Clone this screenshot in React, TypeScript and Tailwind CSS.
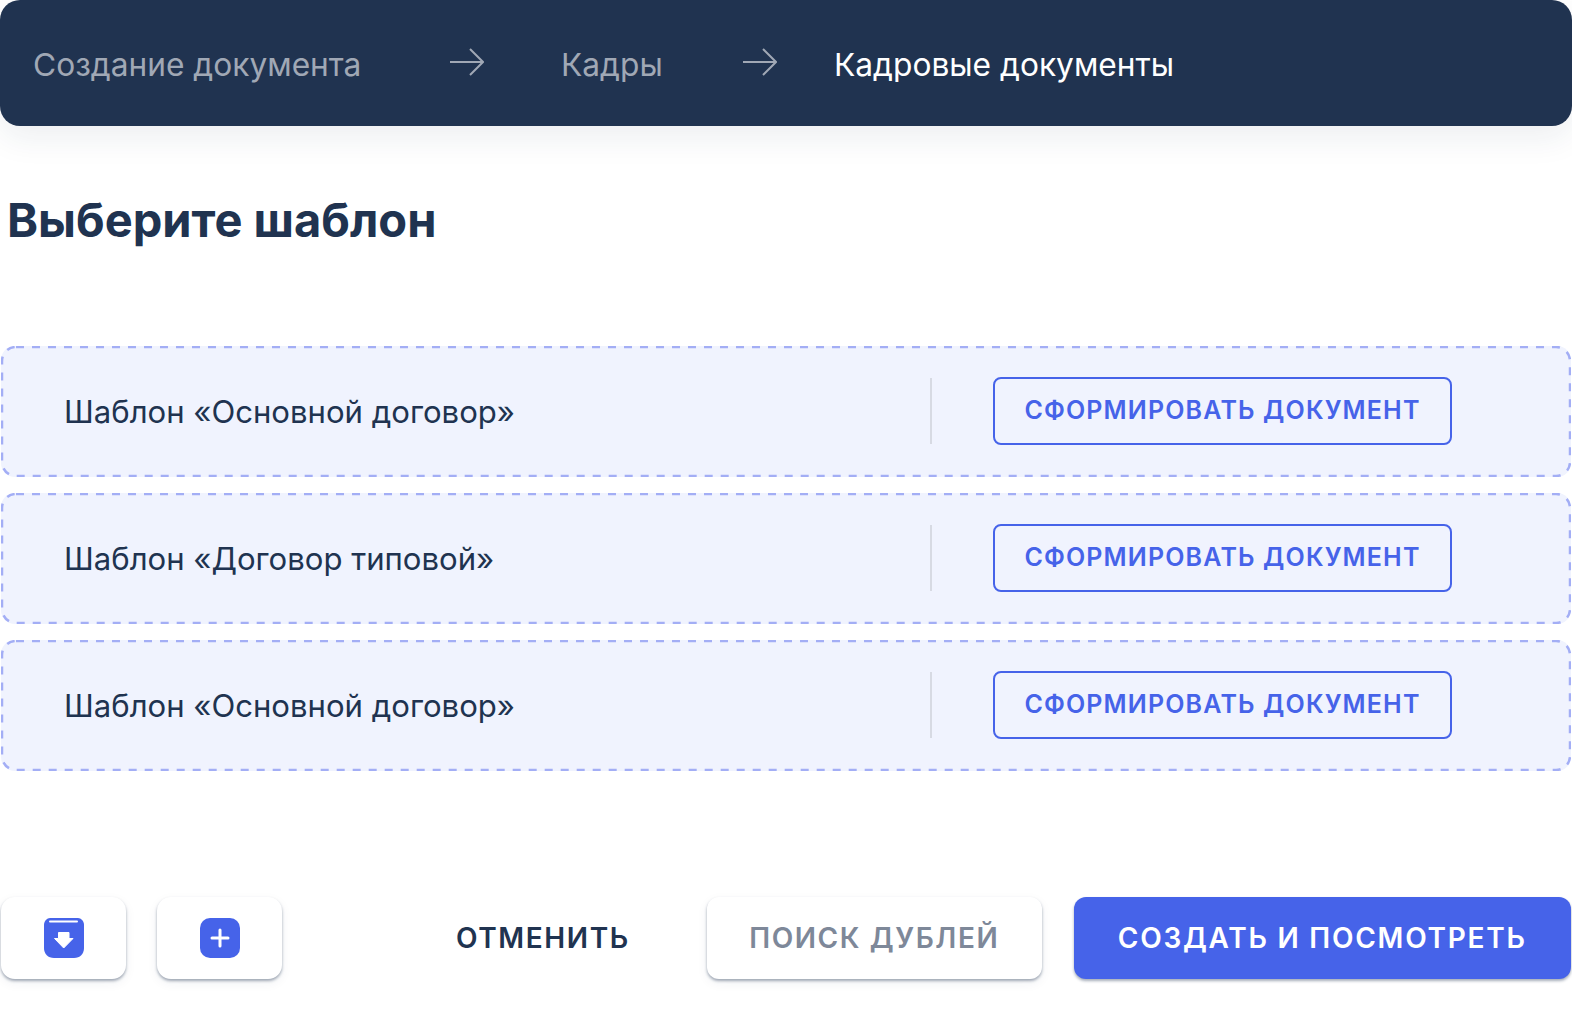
import { ReactNode } from 'react';

const templates = ['Шаблон «Основной договор»', 'Шаблон «Договор типовой»', 'Шаблон «Основной договор»'];

const Arrow = () => (
  <svg width="34" height="30" viewBox="0 0 34 30" fill="none" stroke="#a0a8b5" strokeWidth="2" className="shrink-0 -mt-0.5">
    <path d="M0 15H33" />
    <path d="M20 2L33 15L20 28" />
  </svg>
);

const IconButton = ({ children }: { children: ReactNode }) => (
  <button className="w-[125px] h-[82px] bg-white rounded-[14px] flex items-center justify-center shadow-[0_2px_3px_rgba(30,50,80,0.4),0_4px_12px_rgba(30,50,80,0.06)]">
    {children}
  </button>
);

const App = () => {
  return (
    <div className="w-[1572px] h-[1020px] bg-white overflow-hidden flex flex-col font-['Inter',sans-serif]">
      <header className="h-[126px] shrink-0 bg-[#203350] rounded-[20px] pl-[33px] flex items-center text-[31.7px] leading-[40px] shadow-[0_12px_32px_rgba(30,50,80,0.08)]">
        <span className="text-[#a0a8b5] w-[417px] mt-1">Создание документа</span>
        <Arrow />
        <span className="text-[#a0a8b5] ml-[77px] w-[182px] mt-1">Кадры</span>
        <Arrow />
        <span className="text-white ml-[57px] mt-1">Кадровые документы</span>
      </header>

      <h1 className="mt-[66px] ml-[7px] text-[47px] leading-[56px] font-bold text-[#203350]">Выберите шаблон</h1>

      <div className="mt-[98px] mx-px flex flex-col gap-4">
        {templates.map((name, i) => (
          <div key={i} className="relative h-[131px] bg-[#f0f3fe] rounded-[14px] flex items-center pl-[63px]">
            {/* штриховая рамка: dashed из CSS даёт слишком короткий штрих */}
            <svg width="1570" height="131" className="absolute inset-0 pointer-events-none">
              <rect x="1" y="1" width="1568" height="129" rx="14" fill="none" stroke="#a3aef5" strokeWidth="2.5" strokeDasharray="8 8" />
            </svg>
            <span className="w-[866px] text-[31.1px] mt-[2px] text-[#203350]">{name}</span>
            <div className="w-[2px] h-[66px] -mt-[2px] bg-[#d7dae3]" />
            <button className="ml-[61px] -mt-[2px] w-[459px] h-[68px] rounded-[8px] border-2 border-[#4663e9] text-[#4663e9] text-[25px] font-semibold tracking-[1.15px]">
              СФОРМИРОВАТЬ ДОКУМЕНТ
            </button>
          </div>
        ))}
      </div>

      <footer className="mt-[126px] mx-px flex items-center">
        <IconButton>
          <svg width="40" height="40" viewBox="0 0 40 40">
            <path d="M6 0H34C37 0 40 3 40 7V30C40 36 36 40 30 40H10C4 40 0 36 0 30V7C0 3 3 0 6 0Z" fill="#4663e9" />
            <rect x="5" y="2.5" width="29" height="2" rx="1" fill="#fff" />
            <path d="M14.5 14.5H25V20.5H29L19.7 30L10.5 20.5H14.5Z" fill="#fff" stroke="#fff" strokeLinejoin="round" />
          </svg>
        </IconButton>
        <div className="ml-[31px]">
          <IconButton>
            <svg width="40" height="40" viewBox="0 0 40 40">
              <rect width="40" height="40" rx="10" fill="#4663e9" />
              <path d="M20 12V28M12 20H28" stroke="#fff" strokeWidth="3" strokeLinecap="round" />
            </svg>
          </IconButton>
        </div>
        <button className="ml-[174px] text-[28px] font-semibold tracking-[1.6px] text-[#203350]">ОТМЕНИТЬ</button>
        <button className="ml-[77px] w-[335px] h-[82px] bg-white rounded-[12px] text-[28px] font-semibold tracking-[1.6px] text-[#7e8899] shadow-[0_2px_3px_rgba(30,50,80,0.4),0_4px_12px_rgba(30,50,80,0.06)]">
          ПОИСК ДУБЛЕЙ
        </button>
        <button className="ml-8 w-[497px] h-[82px] bg-[#4663e9] rounded-[12px] text-[28px] font-semibold tracking-[1.75px] text-white shadow-[0_2px_3px_rgba(30,50,80,0.4)]">
          СОЗДАТЬ И ПОСМОТРЕТЬ
        </button>
      </footer>
    </div>
  );
};

export default App;
